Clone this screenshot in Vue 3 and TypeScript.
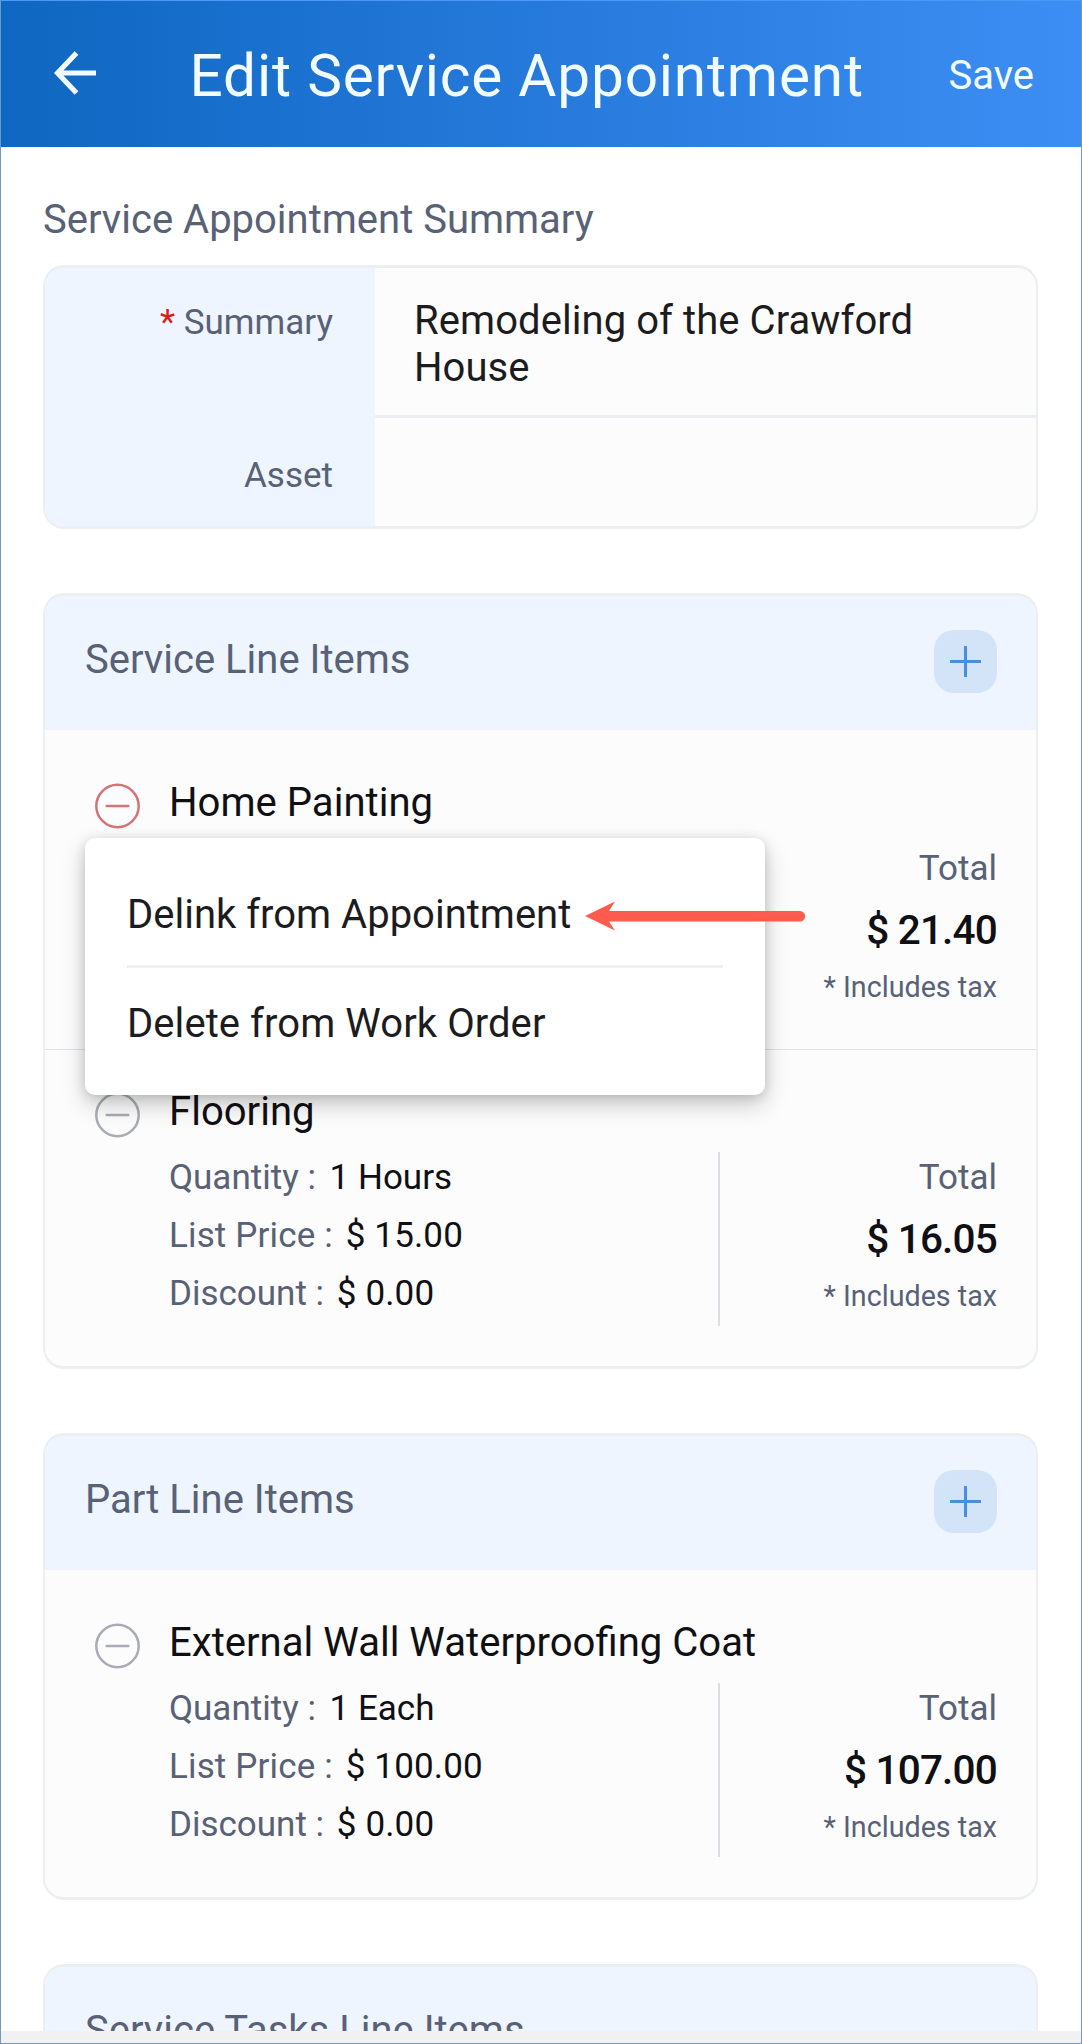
<script setup lang="ts">
interface LineItem {
  name: string
  quantity: string
  listPrice: string
  discount: string
  total: string
  active?: boolean
  menu?: boolean
}

interface Section {
  title: string
  items: LineItem[]
}

const sections: Section[] = [
  {
    title: 'Service Line Items',
    items: [
      { name: 'Home Painting', quantity: '', listPrice: '', discount: '', total: '$ 21.40', active: true, menu: true },
      { name: 'Flooring', quantity: '1 Hours', listPrice: '$ 15.00', discount: '$ 0.00', total: '$ 16.05' },
    ],
  },
  {
    title: 'Part Line Items',
    items: [
      { name: 'External Wall Waterproofing Coat', quantity: '1 Each', listPrice: '$ 100.00', discount: '$ 0.00', total: '$ 107.00' },
    ],
  },
  { title: 'Service Tasks Line Items', items: [] },
]
</script>

<template>
  <div class="screen">
    <header class="bar">
      <svg class="back" width="42" height="44" viewBox="0 0 42 44" fill="none" stroke="#f2fcff" stroke-width="5.2">
        <path d="M42 22H4M22.5 2L3.5 22L22.5 42" />
      </svg>
      <h1 class="title">Edit Service Appointment</h1>
      <span class="save">Save</span>
    </header>

    <main class="content">
      <h2 class="heading">Service Appointment Summary</h2>

      <section class="card form">
        <div class="labels">
          <div class="label first"><span class="req">*</span> Summary</div>
          <div class="label">Asset</div>
        </div>
        <div class="values">
          <div class="value">Remodeling of the Crawford House</div>
          <div class="value empty"></div>
        </div>
      </section>

      <section v-for="s in sections" :key="s.title" class="card list">
        <div class="card-head">
          <h3 class="card-title">{{ s.title }}</h3>
          <button v-if="s.items.length" class="add" aria-label="Add">
            <svg width="63" height="63" viewBox="0 0 63 63" stroke="#4a8fdb" stroke-width="3">
              <path d="M16 31.5H47M31.5 16V47" />
            </svg>
          </button>
        </div>
        <div v-if="s.items.length" class="items">
          <article v-for="item in s.items" :key="item.name" class="item">
            <svg class="minus" :class="{ active: item.active }" width="46" height="46" viewBox="0 0 46 46" fill="none" stroke="currentColor" stroke-width="2.5">
              <circle cx="22.5" cy="23" r="21.2" />
              <path d="M11.7 23H33.3" stroke-linecap="round" />
            </svg>
            <div class="body">
              <div class="name">{{ item.name }}</div>
              <div class="row">
                <div class="details">
                  <template v-if="item.quantity">
                    <div>Quantity : <b>{{ item.quantity }}</b></div>
                    <div class="price">List Price : <b>{{ item.listPrice }}</b></div>
                    <div>Discount : <b class="money">{{ item.discount }}</b></div>
                  </template>
                </div>
                <div class="total">
                  <div class="total-label">Total</div>
                  <div class="amount">{{ item.total }}</div>
                  <div class="tax">* Includes tax</div>
                </div>
              </div>
            </div>
            <div v-if="item.menu" class="menu">
              <div class="option">Delink from Appointment</div>
              <div class="rule"></div>
              <div class="option second">Delete from Work Order</div>
              <svg class="pointer" width="222" height="30" viewBox="0 0 222 30" fill="#fd5b4e">
                <path d="M0 15L30 .5L24 10H215a5 5 0 0 1 0 10.4H24L30 29.5Z" />
              </svg>
            </div>
          </article>
        </div>
      </section>
    </main>
    <div class="footer"></div>
  </div>
</template>

<style>
body {
  margin: 0;
}
</style>

<style scoped>
.screen {
  box-sizing: border-box;
  width: 1082px;
  height: 2044px;
  display: flex;
  flex-direction: column;
  overflow: hidden;
  border: 1px solid #6d9ac9;
  border-top-color: #4c98f8;
  background: #fff;
  font-family: Roboto, "Liberation Sans", sans-serif;
  font-size: 40px;
  color: #1c1c1e;
}
h1,
h2,
h3 {
  margin: 0;
  font-weight: 400;
}
.bar {
  flex: none;
  box-sizing: border-box;
  height: 146px;
  padding: 0 47px 0 53px;
  display: flex;
  align-items: flex-start;
  justify-content: space-between;
  background: linear-gradient(90deg, #0f67c1, #2579da 48%, #3d8ef4);
  color: #f2fcff;
}
.back {
  margin-top: 50px;
}
.title {
  margin-top: 40px;
  margin-left: 9px;
  font-size: 58.5px;
  letter-spacing: 0.8px;
  line-height: 70px;
}
.save {
  margin-top: 51px;
  font-size: 40px;
  line-height: 48px;
}
.content {
  flex: 1;
  min-height: 0;
  overflow: hidden;
  padding: 0 43px 0 42px;
}
.heading {
  padding-top: 49px;
  height: 69px;
  font-size: 40px;
  line-height: 48px;
  color: #586176;
}
.card {
  box-sizing: border-box;
  border: 2px solid #eceff2;
  border-width: 3px 2px;
  border-radius: 21px;
  background: #fcfcfc;
}
.form {
  height: 264px;
  display: flex;
}
.labels {
  width: 330px;
  box-sizing: border-box;
  border-radius: 18px 0 0 18px;
  background: #eef5ff;
  padding-right: 42px;
  text-align: right;
  font-size: 35px;
  line-height: 42px;
  color: #586176;
}
.label {
  padding-top: 34px;
}
.label.first {
  box-sizing: border-box;
  height: 153px;
}
.req {
  color: #dc1c1c;
}
.values {
  flex: 1;
}
.value {
  box-sizing: border-box;
  height: 150px;
  padding: 29px 90px 0 39px;
  line-height: 47px;
  letter-spacing: 0.07px;
  border-bottom: 3px solid #eceff2;
}
.value.empty {
  border: 0;
  height: 108px;
}
.list {
  margin-top: 64px;
}
.card-head {
  box-sizing: border-box;
  height: 134px;
  padding: 34px 39px 0 40px;
  display: flex;
  justify-content: space-between;
  border-radius: 18px 18px 0 0;
  background: #eef5ff;
}
.card-title {
  font-size: 40px;
  line-height: 60px;
  color: #586176;
}
.add {
  width: 63px;
  height: 63px;
  padding: 0;
  border: 0;
  border-radius: 20px;
  background: #d4e4f8;
}
.add svg {
  display: block;
}
.items {
  padding: 11px 0 8px;
}
.item {
  position: relative;
  box-sizing: border-box;
  height: 308px;
  padding: 0 39px 0 50px;
  display: flex;
}
.item + .item {
  border-top: 1px solid #dfe1e6;
  height: 309px;
}
.minus {
  flex: none;
  margin-top: 42px;
  color: #a9acb5;
}
.minus.active {
  color: #d37578;
}
.body {
  flex: 1;
  padding: 39px 0 0 28px;
  color: #101014;
}
.name {
  font-size: 40.1px;
  line-height: 46px;
}
.row {
  display: flex;
  justify-content: space-between;
  padding-top: 14px;
}
.details {
  font-size: 35px;
  line-height: 58px;
  color: #586176;
}
.details b {
  margin-left: 5px;
  font-weight: 400;
  color: #101014;
}
.details .price {
  letter-spacing: 0.15px;
}
.details .price b {
  margin-left: 4px;
}
.details .money {
  margin-left: 4px;
  letter-spacing: 0.15px;
}
.total {
  box-sizing: border-box;
  width: 279px;
  height: 174px;
  margin-top: 3px;
  border-left: 2px solid #dcdee3;
  text-align: right;
  color: #586176;
}
.total-label {
  padding-top: 1px;
  font-size: 35px;
  line-height: 50px;
}
.amount {
  margin-top: -1px;
  font-size: 40.5px;
  line-height: 74px;
  letter-spacing: -0.8px;
  font-weight: 500;
  color: #101014;
}
.tax {
  font-size: 28.7px;
  line-height: 40px;
}
.menu {
  position: absolute;
  z-index: 2;
  left: 40px;
  top: 97px;
  box-sizing: border-box;
  width: 680px;
  height: 257px;
  padding: 53px 42px 0;
  border-radius: 10px;
  background: #fff;
  box-shadow: 0 10px 24px rgba(0, 0, 0, 0.2), 0 2px 12px rgba(0, 0, 0, 0.14);
}
.option {
  line-height: 48px;
}
.option.second {
  padding-top: 32px;
  letter-spacing: 0.07px;
}
.rule {
  height: 3px;
  margin-top: 26px;
  background: #eef1f2;
}
.pointer {
  position: absolute;
  left: 500px;
  top: 63px;
}
.footer {
  flex: none;
  height: 12px;
  background: #f1f1f1;
}
</style>
